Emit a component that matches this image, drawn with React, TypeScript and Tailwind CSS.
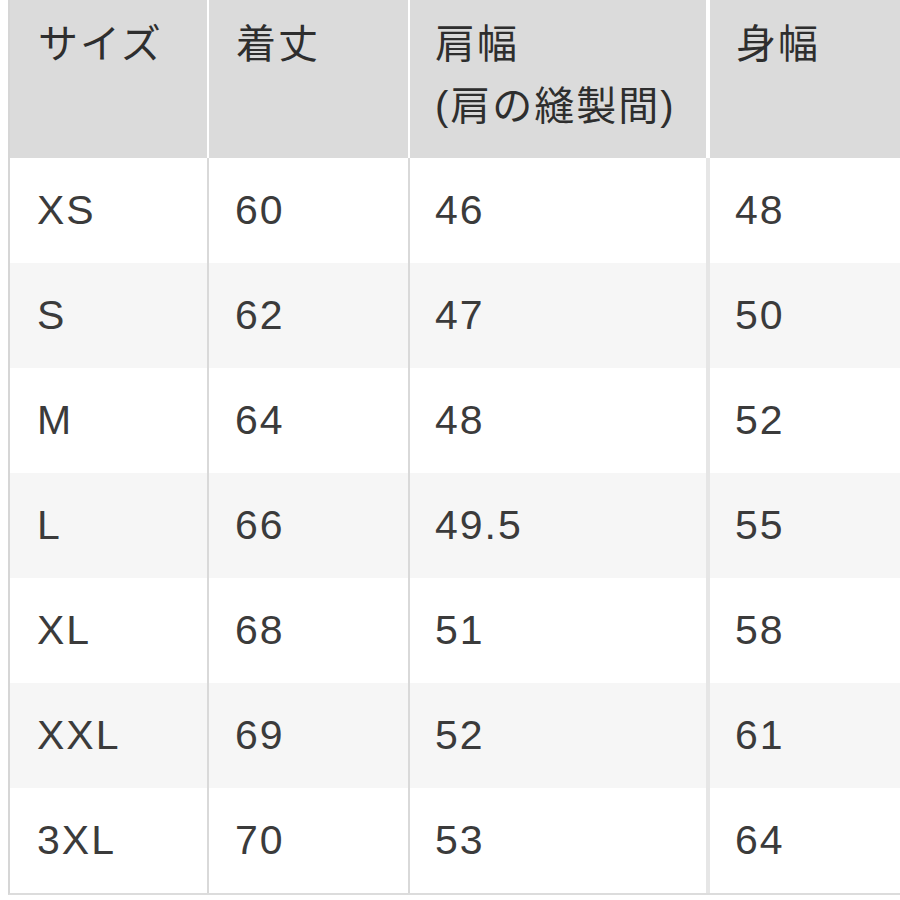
import React from "react";

const rows: [string, string, string, string][] = [
  ["XS", "60", "46", "48"],
  ["S", "62", "47", "50"],
  ["M", "64", "48", "52"],
  ["L", "66", "49.5", "55"],
  ["XL", "68", "51", "58"],
  ["XXL", "69", "52", "61"],
  ["3XL", "70", "53", "64"],
];

const font = {
  fontFamily: '"Liberation Sans", Arial, "Noto Sans CJK JP", sans-serif',
};

export default function App() {
  return (
    <div className="w-[900px] h-[900px] bg-white overflow-hidden" style={font}>
      <div className="ml-[8px] w-[960px] border-l-2 border-[#d6d6d6] border-b-2 border-b-[#dcdcdc] text-[40px] tracking-[2px]">
        <div className="grid grid-cols-[199px_201px_300px_258px] h-[158px] bg-[#dbdbdb] text-[#2e2e2e]">
          <div className="border-r-2 border-white pl-[28px] pt-[14px] leading-[60px]">サイズ</div>
          <div className="border-r-2 border-white pl-[27px] pt-[14px] leading-[60px]">着丈</div>
          <div className="border-r-[4px] border-white pl-[25px] pt-[14px] leading-[60px]">
            <div>肩幅</div>
            <div className="mt-[2px]">(肩の縫製間)</div>
          </div>
          <div className="pl-[26px] pt-[14px] leading-[60px]">身幅</div>
        </div>
        {rows.map((r, i) => (
          <div
            key={r[0]}
            className={
              "grid grid-cols-[199px_201px_300px_258px] h-[105px] items-stretch text-[#3b3b3b] " +
              (i % 2 === 1 ? "bg-[#f6f6f6]" : "bg-white")
            }
          >
            <div className="border-r-2 border-[#d9d9d9] pl-[27px] flex items-center text-[41px]">{r[0]}</div>
            <div className="border-r-2 border-[#d9d9d9] pl-[26px] flex items-center text-[41px]">{r[1]}</div>
            <div className="border-r-[4px] border-[#e6e6e6] pl-[25px] flex items-center text-[41px]">{r[2]}</div>
            <div className="pl-[25px] flex items-center text-[41px]">{r[3]}</div>
          </div>
        ))}
      </div>
    </div>
  );
}
